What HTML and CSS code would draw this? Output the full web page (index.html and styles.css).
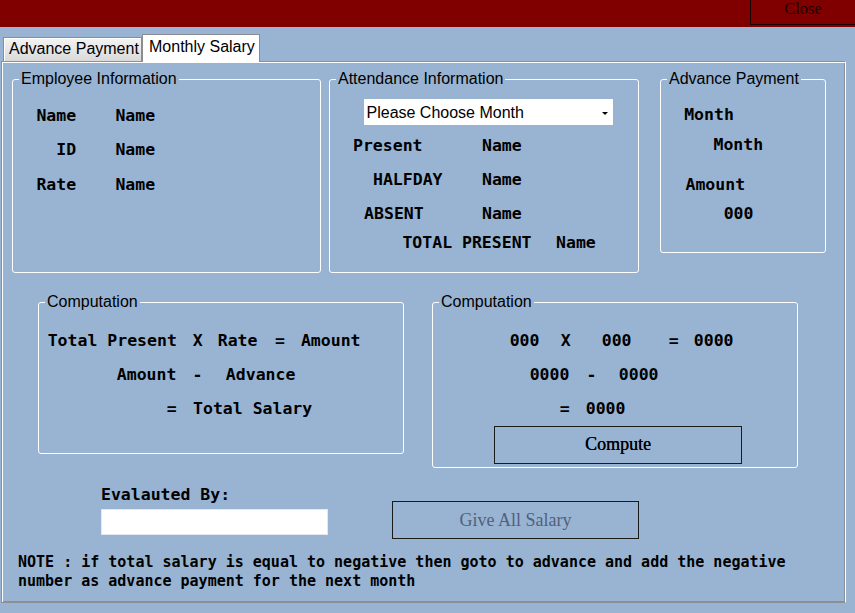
FILE: index.html
```html
<!DOCTYPE html>
<html>
<head>
<meta charset="utf-8">
<title>Monthly Salary</title>
<link rel="stylesheet" href="styles.css">
</head>
<body>
<div class="titlebar"><div class="close-btn">Close</div></div>
<div class="tabs">
  <div class="tab">Advance Payment</div>
  <div class="tab tab-active">Monthly Salary</div>
</div>
<div class="panel">
  <div class="row-top">
    <div class="group g-emp">
      <span class="group-title">Employee Information</span>
      <div class="kv mono"><span class="k">Name</span><span class="v">Name</span></div>
      <div class="kv kv2 mono"><span class="k">ID</span><span class="v">Name</span></div>
      <div class="kv kv3 mono"><span class="k">Rate</span><span class="v">Name</span></div>
    </div>
    <div class="group g-att">
      <span class="group-title">Attendance Information</span>
      <div class="select"><span class="select-text">Please Choose Month</span><span class="arrow"></span></div>
      <div class="att mono att1"><span class="att-k i-present">Present</span><span>Name</span></div>
      <div class="att mono att2"><span class="att-k i-half">HALFDAY</span><span>Name</span></div>
      <div class="att mono att3"><span class="att-k i-absent">ABSENT</span><span>Name</span></div>
      <div class="att mono att4"><span class="i-total">TOTAL PRESENT</span><span class="m-total">Name</span></div>
    </div>
    <div class="group g-adv">
      <span class="group-title">Advance Payment</span>
      <div class="mono adv1">Month</div>
      <div class="mono adv2">Month</div>
      <div class="mono adv3">Amount</div>
      <div class="mono adv4">000</div>
    </div>
  </div>
  <div class="row-mid">
    <div class="group g-comp1">
      <span class="group-title">Computation</span>
      <div class="eq mono eq1"><span class="p-a">Total Present</span><span class="m-a">X</span><span class="m-b">Rate</span><span class="m-c">=</span><span class="m-d">Amount</span></div>
      <div class="eq mono eq2"><span class="p-b">Amount</span><span class="m-e">-</span><span class="m-f">Advance</span></div>
      <div class="eq mono eq3"><span class="p-c">=</span><span class="m-g">Total Salary</span></div>
    </div>
    <div class="group g-comp2">
      <span class="group-title">Computation</span>
      <div class="eq mono eq1"><span class="p-d">000</span><span class="m-h">X</span><span class="m-i">000</span><span class="m-j">=</span><span class="m-k">0000</span></div>
      <div class="eq mono eq2"><span class="p-e">0000</span><span class="m-l">-</span><span class="m-m">0000</span></div>
      <div class="eq mono eq3"><span class="p-f">=</span><span class="m-n">0000</span></div>
      <div class="btn btn-compute">Compute</div>
    </div>
  </div>
  <div class="row-eval">
    <div class="eval-col">
      <div class="mono eval-label">Evalauted By:</div>
      <div class="textbox"></div>
    </div>
    <div class="btn btn-give">Give All Salary</div>
  </div>
  <div class="note">NOTE : if total salary is equal to negative then goto to advance and add the negative<br>number as advance payment for the next month</div>
</div>
</body>
</html>
```
FILE: styles.css
```css
* { box-sizing: border-box; }
body {
  margin: 0;
  width: 855px;
  height: 613px;
  overflow: hidden;
  background: #98b4d2;
  font-family: "Liberation Sans", Arial, sans-serif;
  color: #000;
}
.titlebar {
  height: 27px;
  background: #800000;
  display: flex;
  justify-content: flex-end;
}
.close-btn {
  width: 106px;
  height: 25px;
  margin-right: -1px;
  border: 1px solid #1a0505;
  border-top: none;
  padding-top: 1px;
  font: 16.5px/16px "Liberation Serif", "Times New Roman", serif;
  color: #1a0000;
  text-align: center;
}
.tabs {
  height: 34px;
  display: flex;
  align-items: flex-end;
  padding-left: 3px;
  position: relative;
  z-index: 1;
}
.tab {
  height: 24px;
  width: 139px;
  border: 1px solid #8a8c92;
  border-bottom: none;
  background: linear-gradient(#f4f4f4, #d9d9d9);
  box-shadow: inset 1px 1px 0 #fff;
  font-size: 16px;
  line-height: 18px;
  padding-left: 5px;
  padding-top: 2px;
  white-space: nowrap;
}
.tab-active {
  height: 28px;
  width: 118px;
  margin-bottom: -1px;
  background: #fff;
  box-shadow: none;
  padding-left: 6px;
  padding-top: 3px;
}
.panel {
  margin-left: 1px;
  width: 845px;
  height: 542px;
  border: 1px solid #8d8f95;
  border-right-color: #fff;
  box-shadow: inset 1px 1px 0 #fff, inset -1px -1px 0 #8d8f95;
  padding: 17px 0 0 10px;
}
.group {
  position: relative;
  flex: none;
  border: 1px solid #fff;
  border-radius: 3px;
}
.group-title {
  position: absolute;
  top: -10px;
  left: 6px;
  padding: 0 2px;
  background: #98b4d2;
  font: 16px/18px "Liberation Sans", Arial, sans-serif;
  white-space: nowrap;
}
.mono {
  font-family: "DejaVu Sans Mono", monospace;
  font-weight: bold;
  font-size: 16.5px;
  line-height: 20px;
  height: 20px;
  white-space: pre;
}
.row-top {
  display: flex;
  align-items: flex-start;
}
/* Employee */
.g-emp {
  width: 309px;
  height: 194px;
  padding: 26px 0 0 23.4px;
}
.kv { display: flex; }
.kv .k { width: 39.7px; text-align: right; }
.kv .v { margin-left: 39.3px; }
.kv2 { margin-top: 14px; }
.kv3 { margin-top: 15px; }
/* Attendance */
.g-att {
  width: 310px;
  height: 194px;
  margin-left: 8px;
  padding-top: 19px;
}
.select {
  margin-left: 34px;
  width: 249px;
  height: 26px;
  background: #fff;
  display: flex;
  align-items: center;
  justify-content: space-between;
  padding: 0 5px 0 2.5px;
}
.select-text {
  font-size: 16px;
  line-height: 25px;
}
.arrow {
  width: 0;
  height: 0;
  margin-top: 2px;
  border-left: 3px solid transparent;
  border-right: 3px solid transparent;
  border-top: 3px solid #000;
}
.att { display: flex; }
.att-k { width: 152px; }
.i-present { padding-left: 23px; }
.i-half { padding-left: 43px; }
.i-absent { padding-left: 34.1px; }
.i-total { padding-left: 72.4px; }
.m-total { margin-left: 24.5px; }
.att1 { margin-top: 10.5px; }
.att2 { margin-top: 14px; }
.att3 { margin-top: 14.8px; }
.att4 { margin-top: 8.8px; }
/* Advance */
.g-adv {
  width: 166px;
  height: 174px;
  margin-left: 21px;
  padding-top: 25px;
}
.adv1 { padding-left: 23.2px; }
.adv2 { padding-left: 52.5px; margin-top: 10px; }
.adv3 { padding-left: 24.5px; margin-top: 19.5px; }
.adv4 { padding-left: 62.7px; margin-top: 9px; }
/* Computation */
.row-mid {
  display: flex;
  align-items: flex-start;
  margin-top: 29px;
}
.g-comp1 {
  width: 366px;
  height: 152px;
  margin-left: 26px;
  padding-top: 27.5px;
}
.g-comp2 {
  width: 366px;
  height: 166px;
  margin-left: 28px;
  padding-top: 27.5px;
}
.eq { display: flex; }
.eq2 { margin-top: 14px; }
.eq3 { margin-top: 14.3px; }
.p-a { padding-left: 8.7px; }
.m-a { margin-left: 15.9px; }
.m-b { margin-left: 15.1px; }
.m-c { margin-left: 17.4px; }
.m-d { margin-left: 16.1px; }
.p-b { padding-left: 77.8px; }
.m-e { margin-left: 16.1px; }
.m-f { margin-left: 23.4px; }
.p-c { padding-left: 127.8px; }
.m-g { margin-left: 16.3px; }
.p-d { padding-left: 76.7px; }
.m-h { margin-left: 21.2px; }
.m-i { margin-left: 31.1px; }
.m-j { margin-left: 37.3px; }
.m-k { margin-left: 15px; }
.p-e { padding-left: 96.7px; }
.m-l { margin-left: 17.1px; }
.m-m { margin-left: 22.3px; }
.p-f { padding-left: 126.8px; }
.m-n { margin-left: 16px; }
.btn {
  border: 1px solid #1a1a1a;
  display: flex;
  align-items: center;
  justify-content: center;
  font-family: "Liberation Serif", "Times New Roman", serif;
  font-size: 18px;
}
.btn-compute {
  margin: 7.2px 0 0 61px;
  width: 248px;
  height: 38px;
  color: #000;
  text-shadow: 0.3px 0 0 #000;
}
/* Evaluation */
.row-eval {
  display: flex;
  align-items: flex-start;
  margin-top: 16.5px;
  padding-left: 89px;
}
.textbox {
  margin-top: 4.5px;
  width: 227px;
  height: 26px;
  background: #fff;
  border: 1px solid #e4e8ee;
}
.btn-give {
  margin: 16.5px 0 0 64px;
  width: 247px;
  height: 38px;
  color: #52617a;
}
.note {
  margin-top: 14px;
  padding-left: 6px;
  font-family: "DejaVu Sans Mono", monospace;
  font-weight: bold;
  font-size: 15px;
  line-height: 19px;
  white-space: pre;
}
```
